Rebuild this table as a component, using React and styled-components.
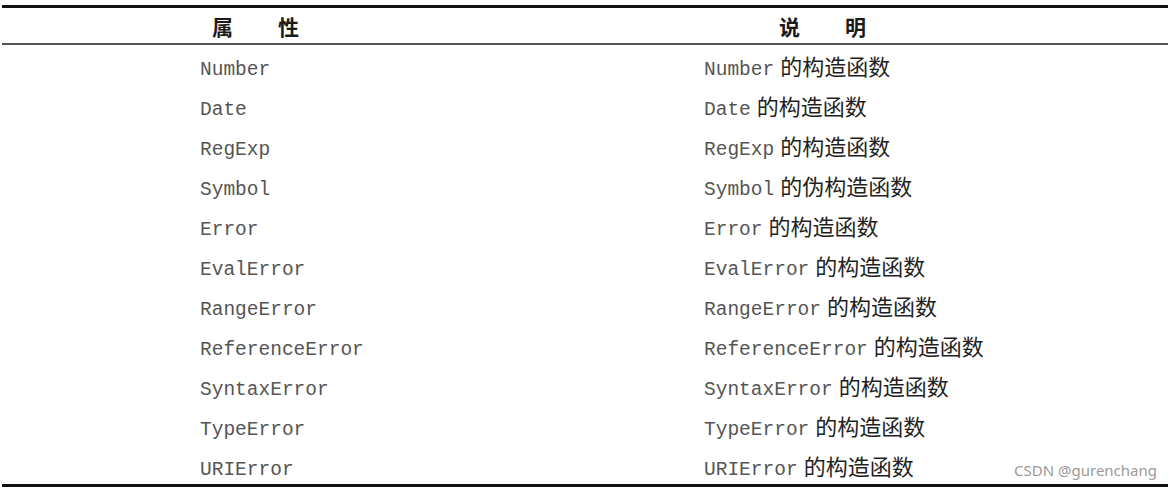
import React from 'react'
import styled, { createGlobalStyle } from 'styled-components'

const GlobalStyle = createGlobalStyle`
  body {
    margin: 0;
    background: #ffffff;
  }
`

const rows = [
  { name: 'Number', desc: '的构造函数' },
  { name: 'Date', desc: '的构造函数' },
  { name: 'RegExp', desc: '的构造函数' },
  { name: 'Symbol', desc: '的伪构造函数' },
  { name: 'Error', desc: '的构造函数' },
  { name: 'EvalError', desc: '的构造函数' },
  { name: 'RangeError', desc: '的构造函数' },
  { name: 'ReferenceError', desc: '的构造函数' },
  { name: 'SyntaxError', desc: '的构造函数' },
  { name: 'TypeError', desc: '的构造函数' },
  { name: 'URIError', desc: '的构造函数' },
]

const Page = styled.div`
  position: relative;
  width: 1172px;
  height: 491px;
  padding-top: 5px;
  box-sizing: border-box;
`

const Table = styled.div`
  margin: 0 4px 0 2px;
  border-top: 3px solid #111;
  border-bottom: 3px solid #111;
`

const HeaderRow = styled.div`
  display: grid;
  grid-template-columns: 504px 1fr;
  height: 35px;
  border-bottom: 2px solid #555;
`

const HeaderCell = styled.div`
  display: flex;
  align-items: center;
  gap: 45px;
  padding-left: ${(p) => p.$indent}px;
  font-family: "Noto Sans CJK SC", sans-serif;
  font-weight: 700;
  font-size: 21px;
  color: #1a1a1a;
`

const Row = styled.div`
  display: grid;
  grid-template-columns: 504px 1fr;
  height: 40px;
  padding-top: 10px;
  box-sizing: border-box;
  &:last-child {
    height: 39px;
  }
`

const Cell = styled.div`
  height: 30px;
  line-height: 30px;
  padding-left: ${(p) => p.$indent}px;
  font-family: "Liberation Mono", monospace;
  font-size: 19.5px;
  color: #555555;
  white-space: nowrap;
`

const Desc = styled.span`
  margin-left: 6px;
  font-family: "Noto Sans CJK SC", sans-serif;
  font-size: 22px;
  line-height: 0;
  color: #1f1f1f;
`

const Watermark = styled.div`
  position: absolute;
  right: 15px;
  bottom: 11px;
  font-family: "Noto Sans", sans-serif;
  font-size: 15px;
  color: #9a9a9a;
`

export default function App() {
  return (
    <>
      <GlobalStyle />
      <Page>
        <Table>
          <HeaderRow>
            <HeaderCell $indent={210}>
              <span>属</span>
              <span>性</span>
            </HeaderCell>
            <HeaderCell $indent={273}>
              <span>说</span>
              <span>明</span>
            </HeaderCell>
          </HeaderRow>
          {rows.map((r) => (
            <Row key={r.name}>
              <Cell $indent={198}>{r.name}</Cell>
              <Cell $indent={198}>
                {r.name}
                <Desc>{r.desc}</Desc>
              </Cell>
            </Row>
          ))}
        </Table>
        <Watermark>CSDN @gurenchang</Watermark>
      </Page>
    </>
  )
}
